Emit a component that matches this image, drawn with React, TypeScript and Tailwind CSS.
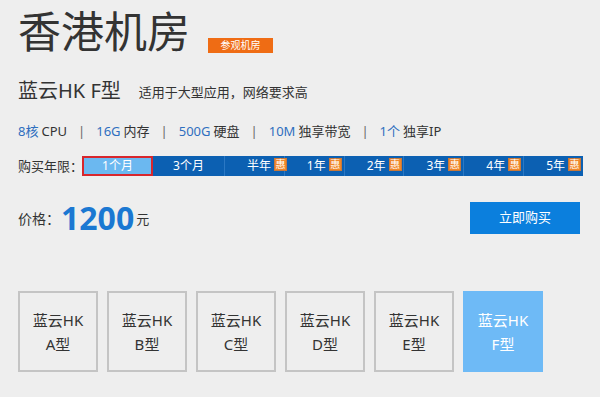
const specs = [
  { num: "8核", label: "CPU" },
  { num: "16G", label: "内存" },
  { num: "500G", label: "硬盘" },
  { num: "10M", label: "独享带宽" },
  { num: "1个", label: "独享IP" },
];

const periods = [
  { label: "1个月", wide: true, sale: false },
  { label: "3个月", wide: true, sale: false },
  { label: "半年", wide: false, sale: true },
  { label: "1年", wide: false, sale: true },
  { label: "2年", wide: false, sale: true },
  { label: "3年", wide: false, sale: true },
  { label: "4年", wide: false, sale: true },
  { label: "5年", wide: false, sale: true },
];

const models = ["A", "B", "C", "D", "E", "F"];

export default function App() {
  return (
    <div className="w-[600px] h-[397px] bg-[#eeeeee] px-[18px] pt-[6px] text-[#333] font-[family-name:'Noto_Sans','Noto_Sans_CJK_SC',sans-serif] overflow-hidden whitespace-nowrap">
      {/* Title */}
      <div className="flex items-end h-[52px]">
        <h1 className="text-[43px] leading-[52px] font-normal">香港机房</h1>
        <span className="ml-[18px] mb-[5px] w-[65px] h-[15px] bg-[#ef6c14] text-white text-[10px] leading-[15px] text-center">
          参观机房
        </span>
      </div>

      {/* Model name */}
      <div className="mt-[21px] h-[24px] flex items-center">
        <span className="text-[20px] leading-[24px]">蓝云HK F型</span>
        <span className="ml-[18px] text-[13px] leading-[24px] mt-[2px]">适用于大型应用，网络要求高</span>
      </div>

      {/* Specs */}
      <div className="mt-[18px] h-[20px] flex items-center text-[13px] leading-[20px]">
        {specs.map((s, i) => (
          <div key={s.num} className="flex items-center">
            {i > 0 && <span className="px-[11px] text-[#666]">|</span>}
            <span className="text-[#2f6fbf]">{s.num}</span>
            <span className="ml-[3px]">{s.label}</span>
          </div>
        ))}
      </div>

      {/* Period */}
      <div className="mt-[15px] h-[20px] flex items-center">
        <span className="w-[64px] shrink-0 text-[13px] leading-[20px]">购买年限：</span>
        <div className="flex-1 min-w-0 h-[20px] flex bg-[#0c60b2] mr-[-1px]">
          {periods.map((p, i) =>
            i === 0 ? (
              <div
                key={p.label}
                className="w-[71px] shrink-0 h-full bg-[#6bb8f0] border-2 border-[#d8262c] flex items-center justify-center text-white text-[12px] leading-none"
              >
                {p.label}
              </div>
            ) : p.wide ? (
              <div
                key={p.label}
                className="w-[72px] shrink-0 h-full flex items-center justify-center text-white text-[12px] leading-none border-r border-[#2b78c4]"
              >
                {p.label}
              </div>
            ) : (
              <div
                key={p.label}
                className="flex-1 min-w-0 h-full flex items-center pl-[22px] text-white text-[12px] leading-none border-r border-[#2b78c4] last:border-r-0"
              >
                <span>{p.label}</span>
                <span className="ml-[3px] self-start mt-[2px] shrink-0 w-[13px] h-[13px] bg-[#f0872a] border border-[#c8783a] text-[10px] leading-[11px] text-center text-white">
                  惠
                </span>
              </div>
            )
          )}
        </div>
      </div>

      {/* Price */}
      <div className="mt-[26px] h-[32px] flex items-center">
        <span className="text-[14px]">价格：</span>
        <span className="ml-[1px] text-[32px] leading-[32px] font-bold text-[#1b78d2] font-[family-name:'Noto_Sans',sans-serif]">1200</span>
        <span className="ml-[2px] mt-[4px] text-[13px]">元</span>
        <button className="ml-auto mr-[2px] w-[110px] h-[32px] bg-[#0b7fdd] text-white text-[13px]">
          立即购买
        </button>
      </div>

      {/* Models */}
      <div className="mt-[57px] flex gap-[9px]">
        {models.map((m) => (
          <div
            key={m}
            className={
              m === "F"
                ? "w-[80px] h-[81px] bg-[#6ebaf6] border-2 border-[#6ebaf6] flex flex-col items-center justify-center text-white text-[15px] leading-[24px]"
                : "w-[80px] h-[81px] border-2 border-[#c4c4c4] flex flex-col items-center justify-center text-[15px] leading-[24px]"
            }
          >
            <span>蓝云HK</span>
            <span>{m}型</span>
          </div>
        ))}
      </div>
    </div>
  );
}
